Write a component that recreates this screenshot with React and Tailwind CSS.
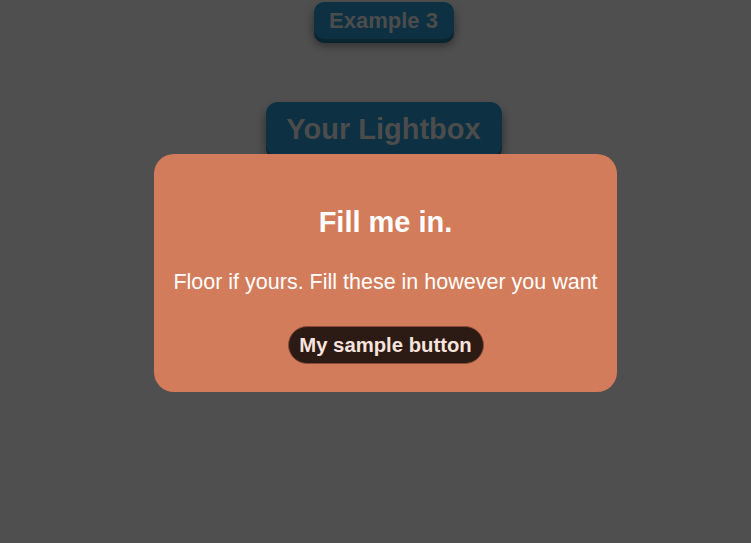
export default function App() {
  return (
    <div className="relative min-h-[543px] w-full bg-[#4f4f4f]" style={{ fontFamily: '"Liberation Sans", Arial, sans-serif' }}>
      <div className="flex flex-col items-center pl-[16px] pt-[2px]">
        <button className="h-[37px] w-[140px] rounded-[10px] bg-[#0d3143] text-[22px] font-bold leading-none text-[#4c4c4c] shadow-[0_4px_0_#0a2430,0_6px_10px_rgba(0,0,0,0.45)]">
          Example 3
        </button>
        <button className="mt-[63px] h-[54px] w-[236px] rounded-[12px] bg-[#0d3143] text-[29px] font-bold leading-none text-[#4c4c4c] shadow-[0_4px_0_#0a2430,0_6px_10px_rgba(0,0,0,0.45)]">
          Your Lightbox
        </button>
      </div>
      <div className="absolute left-[154px] top-[154px] flex h-[238px] w-[463px] flex-col items-center rounded-[20px] bg-[#d37c5b] pt-[50px] text-white">
        <h1 className="text-[29px] font-bold leading-[36px]">Fill me in.</h1>
        <p className="mt-[30px] whitespace-nowrap text-[21.5px] leading-[24px]">Floor if yours. Fill these in however you want</p>
        <button className="mt-[32px] h-[38px] w-[196px] rounded-full border border-[#8a4a36] bg-[#2c1a14] text-[20.3px] font-bold leading-none text-[#f8e4dc]">
          My sample button
        </button>
      </div>
    </div>
  );
}
